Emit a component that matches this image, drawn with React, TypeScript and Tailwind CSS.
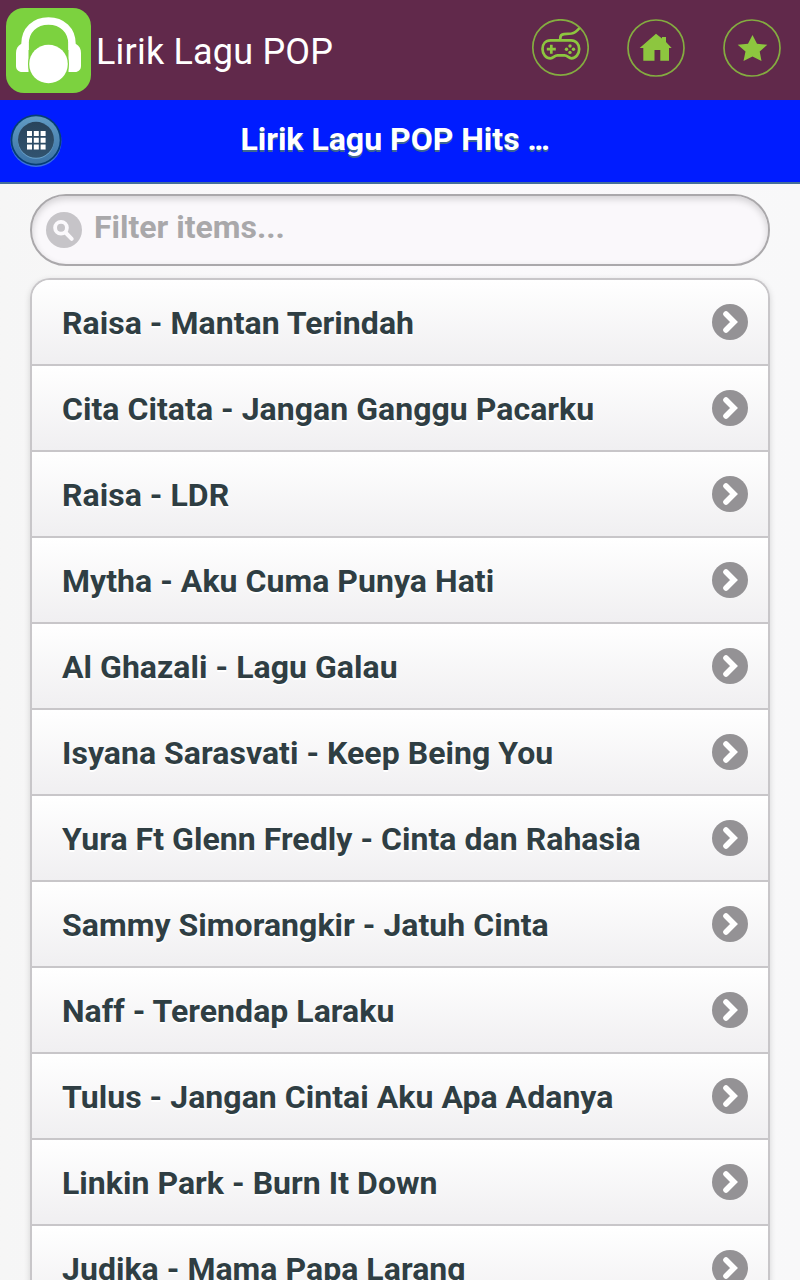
const songs = [
  "Raisa - Mantan Terindah",
  "Cita Citata - Jangan Ganggu Pacarku",
  "Raisa - LDR",
  "Mytha - Aku Cuma Punya Hati",
  "Al Ghazali - Lagu Galau",
  "Isyana Sarasvati - Keep Being You",
  "Yura Ft Glenn Fredly - Cinta dan Rahasia",
  "Sammy Simorangkir - Jatuh Cinta",
  "Naff - Terendap Laraku",
  "Tulus - Jangan Cintai Aku Apa Adanya",
  "Linkin Park - Burn It Down",
  "Judika - Mama Papa Larang",
];

function AppLogo() {
  return (
    <svg className="w-[85px] h-[85px] shrink-0" viewBox="0 0 85 85">
      <rect width="85" height="85" rx="18" fill="#7cd23f" />
      <path d="M19 42V36C19 22 29 13 42.500 13S66 22 66 36V42" fill="none" stroke="#fff" strokeWidth="7.500" />
      <path d="M22.500 35V64H16C12.500 64 10 61.500 10 58V45C10 41 11.500 38 15 36Z" fill="#fff" />
      <path d="M62.500 35V64H69C72.500 64 75 61.500 75 58V45C75 41 73.500 38 70 36Z" fill="#fff" />
      <circle cx="42.500" cy="56" r="20.500" fill="#7cd23f" />
      <circle cx="42.500" cy="56" r="19.300" fill="#fff" />
    </svg>
  );
}

function GamepadIcon() {
  return (
    <svg className="w-[58px] h-[58px]" viewBox="0 0 58 58" fill="none" stroke="#8dc63f">
      <circle cx="29.500" cy="28.500" r="27.700" strokeWidth="1.700" stroke="#84ac40" />
      <path d="M29.300 20V19Q29.300 15.500 33 15.200L40.500 14.500Q44.500 14 48.500 9" strokeWidth="2.700" />
      <path
        d="M19.500 21.300H40C45 21.300 48.200 25.500 48.200 30S45 39.300 40.500 39.300C37.500 39.300 36.800 36.300 33.500 36.300H26.500C23.200 36.300 22.500 39.300 19.500 39.300C15 39.300 11.500 35 11.500 30S14.500 21.300 19.500 21.300Z"
        strokeWidth="2.700"
      />
      <path d="M20.300 25.700V34.700M15.800 30.200H24.800" strokeWidth="2.700" />
      <g fill="#8dc63f" stroke="none">
        <circle cx="39" cy="27" r="1.700" />
        <circle cx="39" cy="33.400" r="1.700" />
        <circle cx="35.500" cy="30.200" r="1.700" />
        <circle cx="42.500" cy="30.200" r="1.700" />
      </g>
    </svg>
  );
}

function HomeIcon() {
  return (
    <svg className="w-[58px] h-[58px]" viewBox="0 0 58 58">
      <circle cx="29" cy="29" r="28" fill="none" stroke="#84ac40" strokeWidth="1.700" />
      <path d="M12.700 29L29 14.700L35 19.500V18H39V23L44.700 29H42V41.800H33.300V31H27.500V41.800H16.300V29Z" fill="#8dc63f" />
    </svg>
  );
}

function StarIcon() {
  return (
    <svg className="w-[58px] h-[58px]" viewBox="0 0 58 58">
      <circle cx="29" cy="29" r="28" fill="none" stroke="#84ac40" strokeWidth="1.700" />
      <path d="M29.500 16L34 24.800L44.300 25.700L36.700 32.500L38.500 42L29.500 37.500L20.500 42L22.500 32.500L14.700 25.700L25 24.800Z" fill="#8dc63f" />
    </svg>
  );
}

function GridIcon() {
  return (
    <svg className="w-[54px] h-[54px]" viewBox="0 0 54 54">
      <defs>
        <linearGradient id="ring" x1="0" y1="0" x2="0" y2="1">
          <stop offset="0" stopColor="#619bc4" />
          <stop offset="1" stopColor="#3c73a5" />
        </linearGradient>
        <linearGradient id="face" x1="0" y1="0" x2="0" y2="1">
          <stop offset="0" stopColor="#28435b" />
          <stop offset="1" stopColor="#31536f" />
        </linearGradient>
      </defs>
      <circle cx="27" cy="28.500" r="25.500" fill="#3b70df" />
      <circle cx="27" cy="27" r="25.500" fill="#063e75" />
      <circle cx="27" cy="27" r="23.700" fill="url(#ring)" />
      <circle cx="27" cy="27.800" r="18" fill="#6aa2cb" />
      <circle cx="27" cy="26.800" r="18" fill="url(#face)" />
      <path
        d="M18 18h5v5h-5zM24.800 18h5v5h-5zM31.600 18h5v5h-5zM18 24.800h5v5h-5zM24.800 24.800h5v5h-5zM31.600 24.800h5v5h-5zM18 31.600h5v5h-5zM24.800 31.600h5v5h-5zM31.600 31.600h5v5h-5z"
        fill="#fff"
      />
    </svg>
  );
}

function SearchIcon() {
  return (
    <svg className="w-9 h-9 shrink-0" viewBox="0 0 36 36" fill="none" stroke="#fbf9fc">
      <circle cx="18" cy="18" r="18" fill="#c6c4c8" stroke="none" />
      <circle cx="15" cy="15.700" r="5.900" strokeWidth="3.800" />
      <path d="M19.500 20.500L25.700 26.800" strokeWidth="4" strokeLinecap="round" />
    </svg>
  );
}

function ArrowIcon() {
  return (
    <svg className="w-9 h-9 shrink-0" viewBox="0 0 36 36">
      <circle cx="18" cy="18" r="18" fill="#949295" />
      <path d="M14 10L22 18L14 26" fill="none" stroke="#fff" strokeWidth="5.600" strokeLinecap="round" />
    </svg>
  );
}

export default function App() {
  return (
    <div className="h-[1280px] overflow-hidden bg-linear-to-r from-[#f6f6f6] via-[#fbf9fc] to-[#f8f8f9] font-[Roboto,sans-serif]">
      {/* App bar */}
      <header className="flex h-[100px] items-center bg-[#61294b] pl-1.5 pr-[19px]">
        <AppLogo />
        <h1 className="ml-[5px] pt-1 text-4xl tracking-[0.2px] text-white">Lirik Lagu POP</h1>
        <nav className="ml-auto flex gap-[38px] pb-1">
          <button aria-label="Games"><GamepadIcon /></button>
          <button aria-label="Home"><HomeIcon /></button>
          <button aria-label="Favorites"><StarIcon /></button>
        </nav>
      </header>

      {/* Page title */}
      <div className="flex h-[84px] items-center border-b-2 border-[#456f9a] bg-[#001cff] pl-[9px]">
        <button aria-label="Menu" className="pb-0.5"><GridIcon /></button>
        <h2 className="flex-1 pb-1 pr-[75px] text-center text-[32px] leading-10 font-bold text-white [text-shadow:0_2px_0_#3e6790]">
          Lirik Lagu POP Hits <span className="tracking-[-2.6px]">...</span>
        </h2>
      </div>

      <main className="px-[30px] pt-2.5">
        <div className="flex h-[72px] items-center rounded-[36px] border-2 border-[#aaa8ab] bg-[#faf8fb] pl-3.5 shadow-[inset_0_3px_7px_rgba(0,0,0,0.16)]">
          <SearchIcon />
          <span className="ml-3 pb-1.5 text-[32px] leading-10 font-bold text-[#a9a8aa]">Filter items...</span>
        </div>

        <ul className="mt-3 rounded-t-[20px] border-2 border-b-0 border-[#c8c6c9] shadow-[0_2px_6px_rgba(0,0,0,0.15)]">
          {songs.map((song) => (
            <li
              key={song}
              className="flex h-[86px] items-center justify-between border-b-2 border-[#c8c6c9] bg-linear-to-b from-white to-[#f0eff1] pl-[30px] pr-5 first:rounded-t-[18px]"
            >
              <span className="pt-0.5 text-[32px] leading-10 font-bold tracking-[0.04px] whitespace-nowrap text-[#2f3e43] [text-shadow:0_2px_0_#fff]">
                {song}
              </span>
              <ArrowIcon />
            </li>
          ))}
        </ul>
      </main>
    </div>
  );
}
